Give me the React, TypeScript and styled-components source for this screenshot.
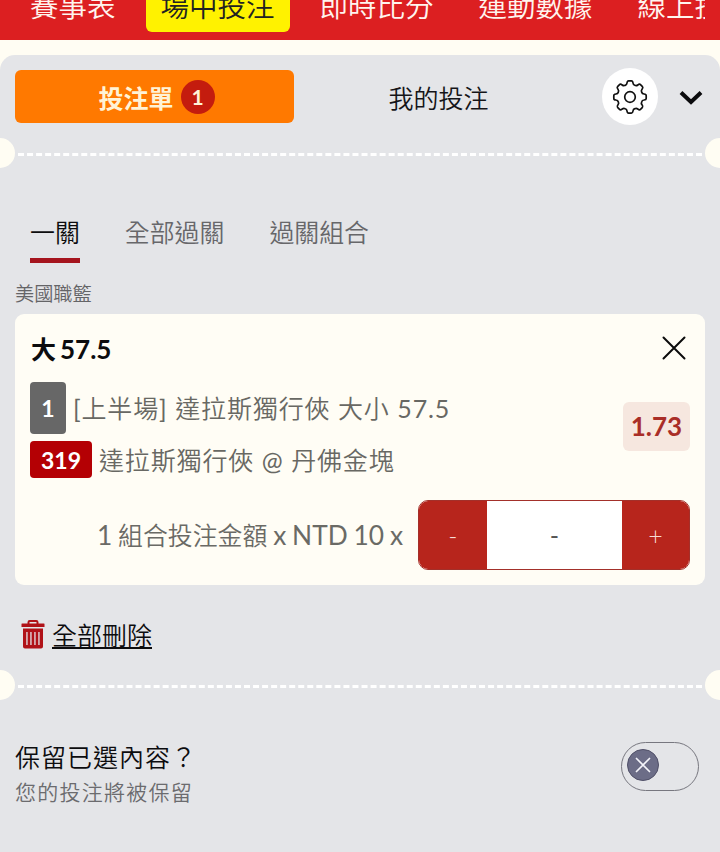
import { useState } from "react";
import { createGlobalStyle, styled } from "styled-components";

const navItems = ["賽事表", "場中投注", "即時比分", "運動數據", "線上投注"];
const betTypes = ["一關", "全部過關", "過關組合"];

// one tooth and the valley after it, repeated every 45 degrees
const gearPath = () => {
  const at = (x: number, y: number, step: number) => {
    const a = (step * Math.PI) / 4;
    const px = 18 + x * Math.cos(a) - y * Math.sin(a);
    const py = 18 + x * Math.sin(a) + y * Math.cos(a);
    return `${px.toFixed(2)} ${py.toFixed(2)}`;
  };
  let d = "";
  for (let i = 0; i < 8; i++) {
    d += `${i === 0 ? "M" : "L"}${at(-3, -14, i)}`;
    d += `Q${at(-2.7, -16.2, i)} ${at(-1.4, -16.2, i)}`;
    d += `L${at(1.4, -16.2, i)}`;
    d += `Q${at(2.7, -16.2, i)} ${at(3, -14, i)}`;
    d += `Q${at(3.2, -12.2, i)} ${at(4.8, -11.7, i)}`;
    d += `Q${at(-3.2, -12.2, i + 1)} ${at(-3, -14, i + 1)}`;
  }
  return d + "Z";
};

export default function App() {
  const [nav, setNav] = useState(1);
  const [type, setType] = useState(0);

  return (
    <>
      <GlobalStyle />
      <Header>
        <Nav>
          {navItems.map((item, i) => (
            <NavItem key={item} $active={i === nav} onClick={() => setNav(i)}>
              {item}
            </NavItem>
          ))}
        </Nav>
      </Header>
      <Slip>
        <SlipHeader>
          <SlipTab $active>
            投注單<Count>1</Count>
          </SlipTab>
          <SlipTab>我的投注</SlipTab>
          <SettingsButton aria-label="settings">
            <svg width="36" height="36" viewBox="0 0 36 36" fill="none" stroke="#111" strokeWidth="1.7">
              <path d={gearPath()} strokeLinejoin="round" />
              <circle cx="18" cy="18" r="5.3" />
            </svg>
          </SettingsButton>
          <CollapseButton aria-label="collapse">
            <svg width="24" height="16" viewBox="0 0 24 16" fill="none" stroke="#0b0b0d" strokeWidth="4">
              <path d="M2 3.5L12 13L22 3.5" />
            </svg>
          </CollapseButton>
        </SlipHeader>
        <Perforation>
          <Notch />
          <Dashes />
          <Notch $right />
        </Perforation>
        <TypeTabs>
          {betTypes.map((item, i) => (
            <TypeTab key={item} $active={i === type} onClick={() => setType(i)}>
              {item}
            </TypeTab>
          ))}
        </TypeTabs>
        <League>美國職籃</League>
        <Card>
          <CardTitle>
            <Pick>
              大<Latin>57.5</Latin>
            </Pick>
            <CloseButton aria-label="remove">
              <svg width="24" height="24" viewBox="0 0 24 24" stroke="#0b0b0b" strokeWidth="2" strokeLinecap="round">
                <path d="M1.5 1.5L22.5 22.5M22.5 1.5L1.5 22.5" />
              </svg>
            </CloseButton>
          </CardTitle>
          <Details>
            <Lines>
              <Line $height={52}>
                <Tag>1</Tag>
                <LineText>
                  <Regular>[</Regular>上半場<Regular>]</Regular> 達拉斯獨行俠 大小 <Regular>57.5</Regular>
                </LineText>
              </Line>
              <Line $height={37}>
                <Tag $red>319</Tag>
                <LineText>
                  達拉斯獨行俠 <Regular>@</Regular> 丹佛金塊
                </LineText>
              </Line>
            </Lines>
            <Odds>1.73</Odds>
          </Details>
          <StakeRow>
            <StakeLabel>
              <Regular>1 </Regular>
              <StakeName>組合投注金額</StakeName>
              <Regular> x NTD 10 x</Regular>
            </StakeLabel>
            <Stepper>
              <StepButton>-</StepButton>
              <StepValue>-</StepValue>
              <StepButton>+</StepButton>
            </Stepper>
          </StakeRow>
        </Card>
        <DeleteAll>
          <svg width="24" height="29" viewBox="0 0 24 29">
            <path d="M7.5 4V2.2Q7.5 1 8.7 1H15.3Q16.5 1 16.5 2.2V4" fill="none" stroke="#b01218" strokeWidth="2" />
            <path
              fill="#b01218"
              fillRule="evenodd"
              d="M1 3.5H23Q23.5 3.5 23.5 4V7H.5V4Q.5 3.5 1 3.5ZM2 8.5H22V26.5Q22 28.5 20 28.5H4Q2 28.5 2 26.5ZM5.3 12V25H6.6V12ZM9.3 12V25H10.6V12ZM13.3 12V25H14.6V12ZM17.3 12V25H18.6V12Z"
            />
          </svg>
          <DeleteText>全部刪除</DeleteText>
        </DeleteAll>
        <Perforation>
          <Notch />
          <Dashes />
          <Notch $right />
        </Perforation>
        <KeepRow>
          <div>
            <KeepTitle>保留已選內容？</KeepTitle>
            <KeepHint>您的投注將被保留</KeepHint>
          </div>
          <Toggle aria-label="keep">
            <Knob>
              <svg width="16" height="16" viewBox="0 0 16 16" stroke="#f4f4fa" strokeWidth="1.7" strokeLinecap="round">
                <path d="M1.5 1.5L14.5 14.5M14.5 1.5L1.5 14.5" />
              </svg>
            </Knob>
          </Toggle>
        </KeepRow>
      </Slip>
    </>
  );
}

const GlobalStyle = createGlobalStyle`
  * {
    box-sizing: border-box;
  }

  body {
    margin: 0;
    background: #fffdf3;
    color: #0c0c0e;
    font-family: Lato, "Noto Sans CJK TC", sans-serif;
    font-size: 25px;
    font-weight: 350;
    overflow: hidden;
  }

  button {
    padding: 0;
    border: 0;
    background: none;
    color: inherit;
    font: inherit;
    cursor: pointer;
  }

  svg {
    display: block;
    flex: none;
  }
`;

const Header = styled.header`
  height: 40px;
  padding: 0 15px 8px;
  background: #dc1f21;
`;

const Nav = styled.nav`
  display: flex;
  align-items: flex-end;
  gap: 15px;
  height: 32px;
  overflow: hidden;
`;

const NavItem = styled.button<{ $active?: boolean }>`
  flex: none;
  height: 52px;
  padding: 0 15px;
  border-radius: 6px;
  font-size: 28.5px;
  line-height: 52px;
  white-space: nowrap;
  color: ${(p) => (p.$active ? "#222" : "#fff4ee")};
  background: ${(p) => (p.$active ? "#fff200" : "none")};
`;

const Slip = styled.main`
  height: 797px;
  margin-top: 15px;
  background: #e4e5e8;
  border-radius: 15px 15px 0 0;
`;

const SlipHeader = styled.div`
  display: flex;
  align-items: center;
  height: 83px;
  padding: 0 17px 0 15px;
`;

const SlipTab = styled.button<{ $active?: boolean }>`
  display: flex;
  align-items: center;
  justify-content: center;
  gap: 7px;
  width: ${(p) => (p.$active ? 279 : 289)}px;
  height: 53px;
  padding-left: ${(p) => (p.$active ? 4 : 0)}px;
  border-radius: 6px;
  font-weight: ${(p) => (p.$active ? 700 : 350)};
  color: ${(p) => (p.$active ? "#fff3d6" : "#151518")};
  background: ${(p) => (p.$active ? "#ff7900" : "none")};
`;

const Count = styled.span`
  width: 34px;
  height: 34px;
  border-radius: 50%;
  background: #c41c0e;
  font-size: 21px;
  line-height: 33px;
`;

const SettingsButton = styled.button`
  display: flex;
  align-items: center;
  justify-content: center;
  width: 56px;
  height: 57px;
  margin-left: 19px;
  border-radius: 50%;
  background: #fff;
`;

const CollapseButton = styled.button`
  margin-left: auto;
`;

const Perforation = styled.div`
  display: flex;
  align-items: center;
  gap: 3px;
  height: 30px;
`;

const Notch = styled.span<{ $right?: boolean }>`
  width: 15px;
  height: 30px;
  background: #fffdf3;
  border-radius: ${(p) => (p.$right ? "15px 0 0 15px" : "0 15px 15px 0")};
`;

const Dashes = styled.span`
  flex: 1;
  margin-top: 3px;
  border-top: 3px dashed #fff;
`;

const TypeTabs = styled.div`
  display: flex;
  gap: 45px;
  padding: 45px 30px 0;
`;

const TypeTab = styled.button<{ $active?: boolean }>`
  height: 50px;
  padding-bottom: 7px;
  border-bottom: 5px solid ${(p) => (p.$active ? "#a5141e" : "transparent")};
  font-size: 24.9px;
  line-height: 38px;
  color: ${(p) => (p.$active ? "#0c0c0e" : "#67676a")};
`;

const League = styled.div`
  height: 51px;
  padding: 17px 15px 0;
  color: #646467;
  font-size: 19.2px;
  line-height: 28px;
`;

const Card = styled.section`
  height: 271px;
  margin: 0 15px;
  padding: 0 15px;
  border-radius: 9px;
  background: #fffdf5;
`;

const CardTitle = styled.div`
  display: flex;
  align-items: center;
  justify-content: space-between;
  height: 68px;
  padding-right: 4px;
  font-weight: 700;
`;

const Pick = styled.span`
  display: flex;
  align-items: baseline;
  gap: 4px;
  padding-left: 1px;
`;

const Latin = styled.span`
  font-size: 26px;
`;

const CloseButton = styled.button``;

const Details = styled.div`
  display: flex;
  align-items: center;
  justify-content: space-between;
`;

const Lines = styled.div`
  display: flex;
  flex-direction: column;
  gap: 7px;
`;

const Line = styled.div<{ $height: number }>`
  display: flex;
  align-items: center;
  gap: 7px;
  height: ${(p) => p.$height}px;
  color: #686863;
  letter-spacing: 0.85px;
`;

const LineText = styled.span`
  padding-bottom: 2px;
  white-space: nowrap;
`;

const Regular = styled.span`
  font-weight: 400;
`;

const Tag = styled.span<{ $red?: boolean }>`
  display: flex;
  align-items: center;
  justify-content: center;
  width: ${(p) => (p.$red ? 62 : 36)}px;
  height: 100%;
  border-radius: 4px;
  background: ${(p) => (p.$red ? "#b40004" : "#676767")};
  color: #fff;
  font-size: 23px;
  font-weight: 700;
  letter-spacing: 0;
`;

const Odds = styled.div`
  width: 67px;
  height: 49px;
  border-radius: 6px;
  margin-bottom: 7px;
  background: #f6e7df;
  color: #a92e27;
  font-size: 26px;
  font-weight: 700;
  line-height: 49px;
  text-align: center;
`;

const StakeRow = styled.div`
  display: flex;
  align-items: center;
  justify-content: flex-end;
  gap: 15px;
  margin-top: 22px;
`;

const StakeLabel = styled.span`
  padding-bottom: 2px;
  color: #6a6a65;
  font-size: 26.3px;
  white-space: nowrap;
  word-spacing: -0.9px;
`;

const StakeName = styled.span`
  font-size: 24.9px;
`;

const Stepper = styled.div`
  display: flex;
  width: 272px;
  height: 70px;
  overflow: hidden;
  border: 1px solid #a3302a;
  border-radius: 10px;
  background: #fff;
`;

const StepButton = styled.button`
  width: 68px;
  background: #b7251c;
  color: #f8dcd5;
  font-weight: 300;

  &:last-child {
    width: 67px;
  }
`;

const StepValue = styled.span`
  flex: 1;
  color: #555;
  font-weight: 400;
  line-height: 68px;
  text-align: center;
`;

const DeleteAll = styled.button`
  display: flex;
  align-items: flex-start;
  gap: 7px;
  height: 85px;
  padding: 14px 0 0 21px;

  svg {
    margin-top: 21px;
  }
`;

const DeleteText = styled.span`
  margin-top: 24px;
  border-bottom: 2px solid #0c0c0e;
  line-height: 24px;
`;

const KeepRow = styled.div`
  display: flex;
  justify-content: space-between;
  padding: 38px 21px 0 15px;
`;

const KeepTitle = styled.div`
  letter-spacing: 1px;
  line-height: 38px;
`;

const KeepHint = styled.div`
  color: #6b6b6e;
  font-size: 21px;
  letter-spacing: 1.25px;
  line-height: 32px;
`;

const Toggle = styled.button`
  display: flex;
  width: 78px;
  height: 49px;
  margin-top: 4px;
  padding: 6px 5px;
  border: 1px solid #77777f;
  border-radius: 25px;
`;

const Knob = styled.span`
  display: flex;
  align-items: center;
  justify-content: center;
  width: 32px;
  height: 32px;
  border: 1px solid #505068;
  border-radius: 50%;
  background: #6c6d87;
`;
